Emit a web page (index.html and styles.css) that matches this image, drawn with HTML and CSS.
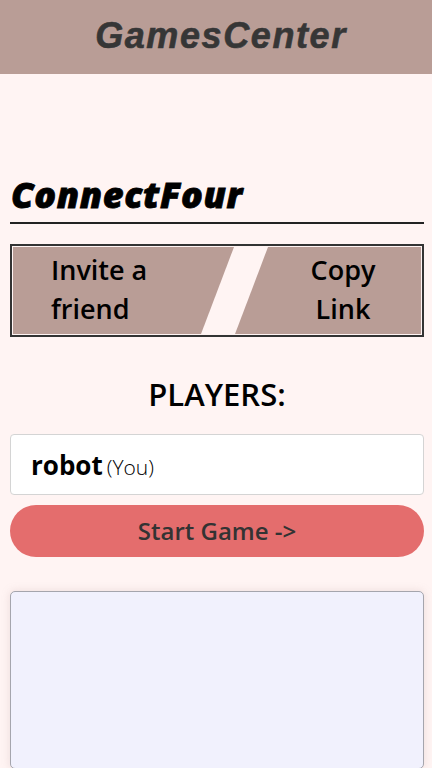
FILE: index.html
```html
<!DOCTYPE html>
<html>
<head>
<meta charset="utf-8">
<link rel="stylesheet" href="styles.css">
</head>
<body>
<header class="topbar"><h1 class="brand">GamesCenter</h1></header>
<main class="content">
  <h2 class="game-title">ConnectFour</h2>
  <div class="share">
    <div class="share-item share-invite">Invite a<br>friend</div>
    <div class="share-item share-copy">Copy<br>Link</div>
  </div>
  <h3 class="players-title">PLAYERS:</h3>
  <div class="player-card"><span class="player-name">robot</span> <span class="player-you">(You)</span></div>
  <button class="start-btn">Start Game -&gt;</button>
  <div class="board-panel"></div>
</main>
</body>
</html>
```
FILE: styles.css
```css
* { box-sizing: border-box; }
html, body { margin: 0; padding: 0; }
body {
  background: #fff4f3;
  font-family: "Open Sans", "Lato", sans-serif;
  color: #000;
  width: 432px;
  height: 768px;
  overflow: hidden;
}
.topbar {
  height: 74px;
  background: #b99d96;
  display: flex;
  align-items: center;
  justify-content: center;
}
.brand {
  margin: 0 0 0 10px;
  font-family: "Liberation Sans", Arial, sans-serif;
  font-style: italic;
  font-weight: 700;
  font-size: 36px;
  letter-spacing: 1.6px;
  color: #363636;
  -webkit-text-stroke: 0.6px #363636;
  padding-bottom: 2px;
}
.content {
  padding: 0 8px 0 10px;
  display: flex;
  flex-direction: column;
}
.game-title {
  margin: 99px 0 0 0;
  padding: 0 0 5px 1px;
  font-family: "Open Sans", sans-serif;
  font-style: italic;
  font-weight: 800;
  font-size: 36px;
  line-height: 44px;
  letter-spacing: 0.6px;
  -webkit-text-stroke: 0.8px #000;
  border-bottom: 2px solid #222;
  width: 414px;
}
.share {
  margin-top: 20px;
  width: 414px;
  height: 93px;
  border: 2px solid #333;
  padding: 1px 1px;
  display: flex;
  gap: 1px;
}
.share-item {
  background: #b99d96;
  font-size: 27px;
  font-weight: 600;
  line-height: 39px;
  display: flex;
  align-items: center;
  padding-bottom: 3px;
}
.share-invite {
  width: 221px;
  padding-left: 38px;
  clip-path: polygon(0 0, 100% 0, calc(100% - 33px) 100%, 0 100%);
}
.share-copy {
  flex: 1;
  padding-left: 30px;
  justify-content: center;
  text-align: center;
  clip-path: polygon(33px 0, 100% 0, 100% 100%, 0 100%);
}
.players-title {
  margin: 37px 0 0 0;
  text-align: center;
  font-size: 31px;
  font-weight: 600;
  line-height: 40px;
  width: 414px;
}
.player-card {
  margin-top: 20px;
  width: 414px;
  height: 61px;
  background: #fff;
  border: 1px solid #d4d4d4;
  border-radius: 4px;
  padding-left: 20px;
  display: flex;
  align-items: center;
  gap: 4px;
}
.player-name {
  font-size: 26px;
  font-weight: 700;
}
.player-you {
  font-size: 21px;
  font-weight: 300;
  padding-top: 4px;
}
.start-btn {
  margin-top: 10px;
  width: 414px;
  height: 52px;
  border: none;
  border-radius: 26px;
  background: #e46d6d;
  color: #333;
  font-family: "Open Sans", "Lato", sans-serif;
  font-size: 24px;
  font-weight: 600;
  padding: 0 0 2px 0;
}
.board-panel {
  margin-top: 34px;
  width: 414px;
  height: 178px;
  background: #f1f1fd;
  border: 1px solid #a5a5ad;
  border-radius: 5px;
  box-shadow: 0 0 8px rgba(180, 150, 150, 0.25);
}
```
